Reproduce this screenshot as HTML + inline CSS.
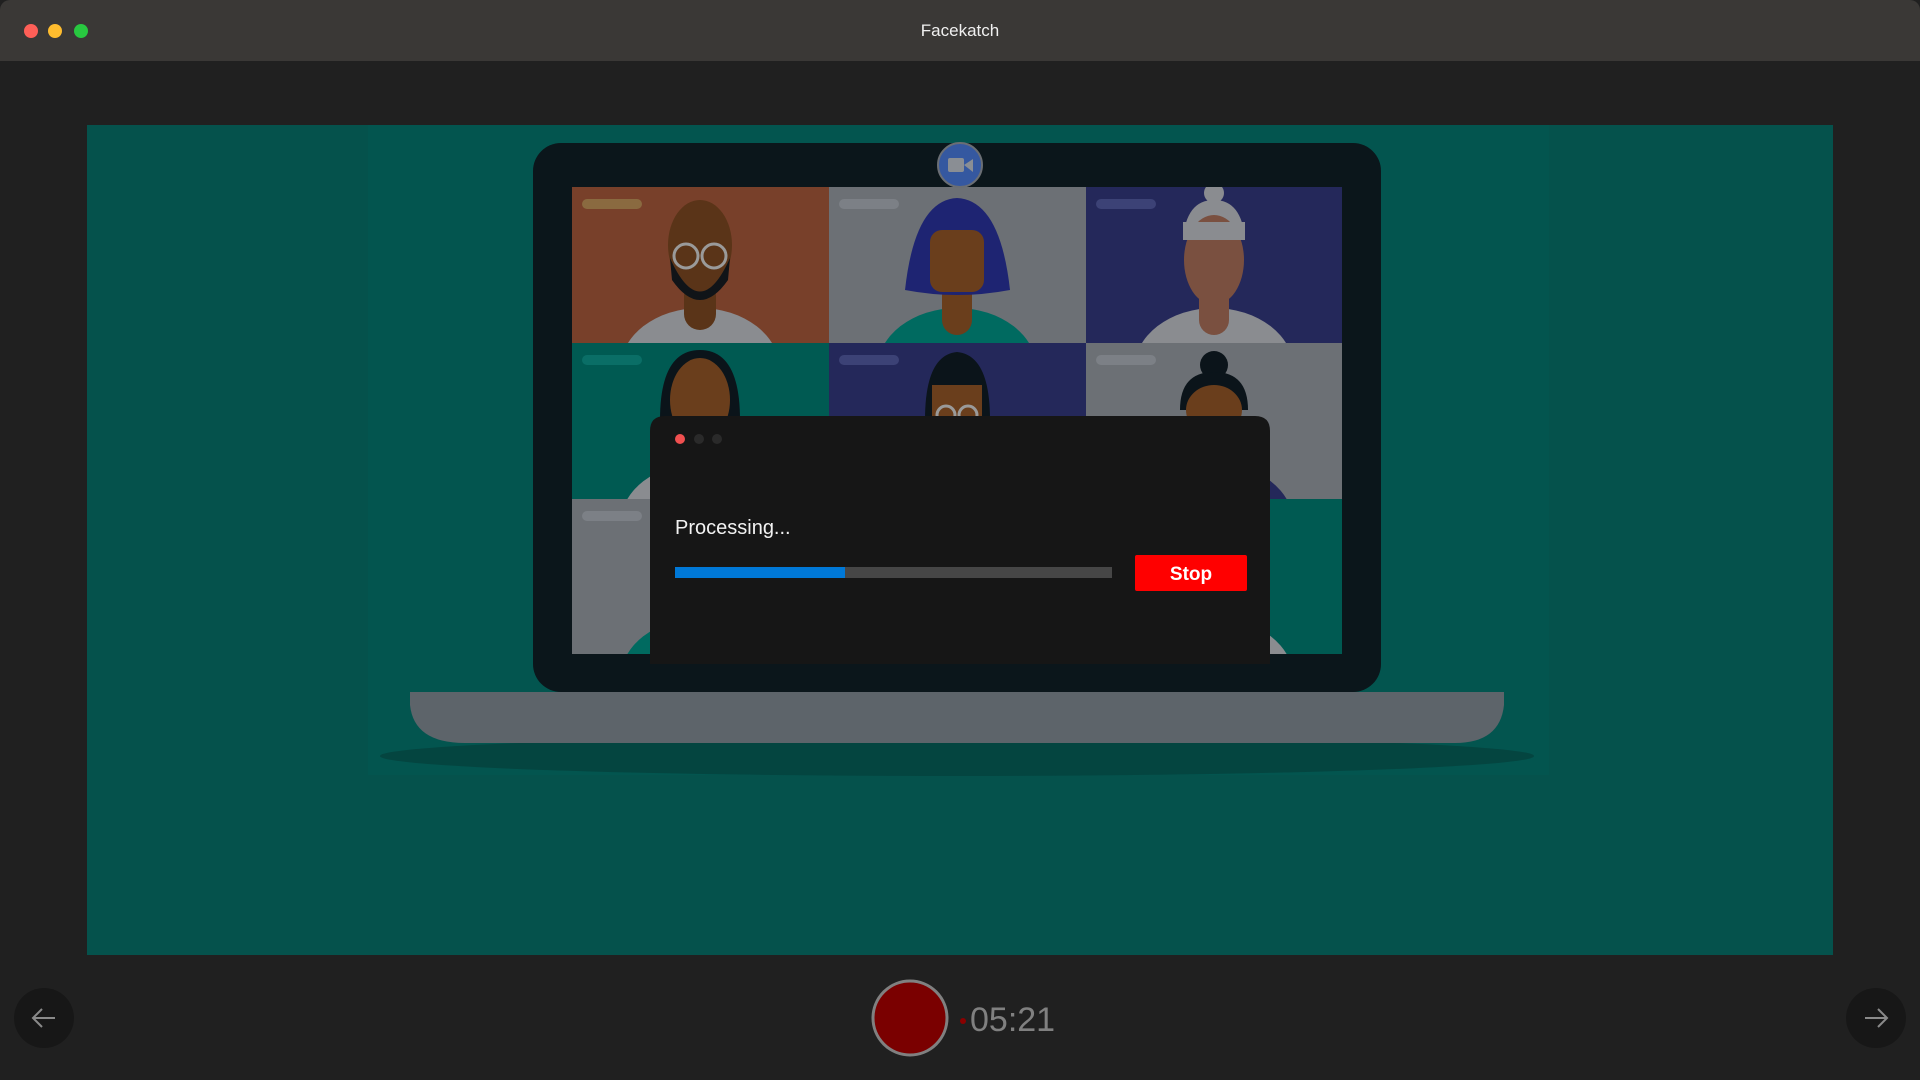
<!DOCTYPE html>
<html><head><meta charset="utf-8"><style>
*{margin:0;padding:0;box-sizing:border-box}
body{width:1920px;height:1080px;background:#202020;position:relative;overflow:hidden;font-family:"Liberation Sans",sans-serif}
.abs{position:absolute}
</style></head><body>
<div class="abs" style="left:0;top:0;width:1920px;height:61px;background:#3a3836;border-radius:10px 10px 0 0"></div>
<div class="abs" style="left:24px;top:24px;width:14px;height:14px;border-radius:50%;background:#fe5f57"></div>
<div class="abs" style="left:48px;top:24px;width:14px;height:14px;border-radius:50%;background:#febc2e"></div>
<div class="abs" style="left:74px;top:24px;width:14px;height:14px;border-radius:50%;background:#28c840"></div>
<div class="abs" style="left:0;top:21px;width:1920px;text-align:center;color:#f0f0f0;font-size:17px">Facekatch</div>

<svg class="abs" style="left:0;top:0" width="1920" height="1080" viewBox="0 0 1920 1080">
<defs>
<clipPath id="r1"><rect x="572" y="187" width="770" height="156"/></clipPath>
<clipPath id="r2"><rect x="572" y="343" width="770" height="156"/></clipPath>
<clipPath id="r3"><rect x="572" y="499" width="770" height="155"/></clipPath>
</defs>
<rect x="87" y="125" width="1746" height="830" fill="#05524c"/>
<rect x="368" y="125" width="1181" height="650" fill="#03554f"/>
<ellipse cx="957" cy="756" rx="577" ry="20" fill="#044540"/>
<path d="M410 692 H1504 V705 Q1500 743 1455 743 H465 Q414 743 410 705 Z" fill="#5d646a"/>
<rect x="533" y="143" width="848" height="549" rx="28" fill="#0b161b"/>
<rect x="572" y="187" width="257" height="156" fill="#78402a"/>
<rect x="829" y="187" width="257" height="156" fill="#6c7075"/>
<rect x="1086" y="187" width="256" height="156" fill="#24285a"/>
<rect x="572" y="343" width="257" height="156" fill="#005a52"/>
<rect x="829" y="343" width="257" height="156" fill="#24285a"/>
<rect x="1086" y="343" width="256" height="156" fill="#6c7075"/>
<rect x="572" y="499" width="257" height="155" fill="#6c7075"/>
<rect x="829" y="499" width="257" height="155" fill="#005a52"/>
<rect x="1086" y="499" width="256" height="155" fill="#005a52"/>
<rect x="582" y="199" width="60" height="10" rx="5" fill="#8a6a40"/>
<rect x="839" y="199" width="60" height="10" rx="5" fill="#7c8086"/>
<rect x="1096" y="199" width="60" height="10" rx="5" fill="#3c4276"/>
<rect x="582" y="355" width="60" height="10" rx="5" fill="#0a6e66"/>
<rect x="839" y="355" width="60" height="10" rx="5" fill="#3c4276"/>
<rect x="1096" y="355" width="60" height="10" rx="5" fill="#7c8086"/>
<rect x="582" y="511" width="60" height="10" rx="5" fill="#7c8086"/>
<g clip-path="url(#r1)">
<ellipse cx="700" cy="370" rx="80" ry="62" fill="#8a8c90"/>
<rect x="684" y="280" width="32" height="50" rx="16" fill="#5a3418"/>
<ellipse cx="700" cy="245" rx="32" ry="45" fill="#5a3418"/>
<path d="M670 258 Q700 325 730 258 L728 280 Q700 320 672 280Z" fill="#101418"/>
<circle cx="686" cy="256" r="12" fill="none" stroke="#9a9a9a" stroke-width="3"/>
<circle cx="714" cy="256" r="12" fill="none" stroke="#9a9a9a" stroke-width="3"/>
<ellipse cx="957" cy="370" rx="80" ry="62" fill="#006a60"/>
<rect x="942" y="280" width="30" height="55" rx="15" fill="#6a3e1c"/>
<path d="M905 290 Q915 200 957 198 Q1000 200 1010 290 Q957 300 905 290Z" fill="#1e2472"/>
<rect x="930" y="230" width="54" height="62" rx="12" fill="#6a3e1c"/>
<ellipse cx="1214" cy="370" rx="80" ry="62" fill="#8a8c90"/>
<rect x="1199" y="280" width="30" height="55" rx="15" fill="#7a5040"/>
<circle cx="1214" cy="193" r="10" fill="#8a8c90"/>
<path d="M1183 240 Q1186 200 1214 200 Q1242 200 1245 240 Z" fill="#8a8c90"/>
<ellipse cx="1214" cy="260" rx="30" ry="45" fill="#7a5040"/>
<rect x="1183" y="222" width="62" height="18" fill="#8a8c90"/>
</g>
<g clip-path="url(#r2)">
<path d="M660 420 Q660 350 700 350 Q740 350 740 420Z" fill="#0b141a"/>
<ellipse cx="700" cy="400" rx="30" ry="42" fill="#6a3e1c"/>
<path d="M925 420 Q925 355 957 352 Q990 355 990 420Z" fill="#0b141a"/>
<rect x="932" y="385" width="50" height="40" fill="#6a3e1c"/>
<circle cx="946" cy="415" r="9" fill="none" stroke="#9a9a9a" stroke-width="3"/>
<circle cx="968" cy="415" r="9" fill="none" stroke="#9a9a9a" stroke-width="3"/>
<circle cx="1214" cy="365" r="14" fill="#0b141a"/>
<path d="M1180 410 Q1180 372 1214 372 Q1248 372 1248 410Z" fill="#0b141a"/>
<ellipse cx="1214" cy="410" rx="28" ry="25" fill="#6a3e1c"/>
<ellipse cx="1214" cy="525" rx="80" ry="62" fill="#24285a"/>
<ellipse cx="700" cy="525" rx="80" ry="62" fill="#8a8c90"/>
</g>
<g clip-path="url(#r3)">
<ellipse cx="700" cy="680" rx="80" ry="62" fill="#006a60"/>
<ellipse cx="1214" cy="680" rx="80" ry="62" fill="#8a8c90"/>
</g>
<circle cx="960" cy="165" r="22" fill="#3558a0" stroke="#6a6e74" stroke-width="2"/>
<rect x="948" y="158" width="16" height="14" rx="2" fill="#8a8e94"/>
<path d="M964 165 L973 159 V172 Z" fill="#8a8e94"/>
<path d="M650 431 Q650 416 665 416 H1255 Q1270 416 1270 431 V664 H650Z" fill="#161616"/>
<circle cx="680" cy="439" r="5" fill="#f05050"/>
<circle cx="699" cy="439" r="5" fill="#2a2a2a"/>
<circle cx="717" cy="439" r="5" fill="#2a2a2a"/>
<rect x="675" y="567" width="437" height="11" fill="#464646"/>
<rect x="675" y="567" width="170" height="11" fill="#0078d7"/>
<rect x="1135" y="555" width="112" height="36" rx="2" fill="#ff0000"/>
<text x="1191" y="580" text-anchor="middle" fill="#fff" font-family="Liberation Sans" font-weight="bold" font-size="19">Stop</text>
<text x="675" y="534" fill="#f2f2f2" font-family="Liberation Sans" font-size="20">Processing...</text>
<circle cx="44" cy="1018" r="30" fill="#171717"/>
<path d="M55 1018 H33 M42 1009 L33 1018 L42 1027" stroke="#8a8a8a" stroke-width="2" fill="none"/>
<circle cx="1876" cy="1018" r="30" fill="#171717"/>
<path d="M1865 1018 H1887 M1878 1009 L1887 1018 L1878 1027" stroke="#8a8a8a" stroke-width="2" fill="none"/>
<circle cx="910" cy="1018" r="37" fill="#7a0000" stroke="#808080" stroke-width="3"/>
<circle cx="963" cy="1021" r="3" fill="#8a0000"/>
<text x="970" y="1031" fill="#808080" font-family="Liberation Sans" font-size="34">05:21</text>
</svg>
</body></html>
